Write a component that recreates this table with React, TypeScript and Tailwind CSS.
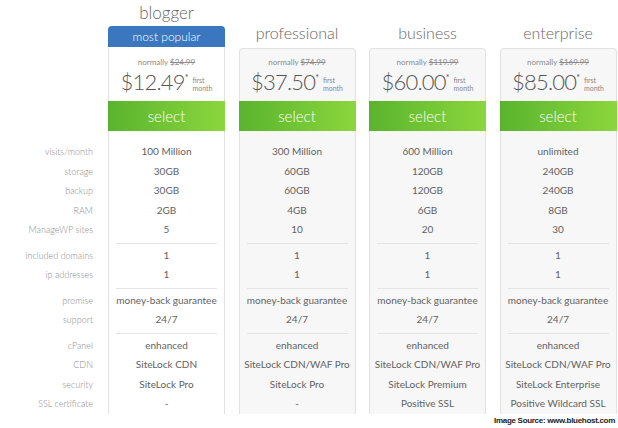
import React from "react";

type Plan = {
  name: string;
  normal: string;
  price: string;
  popular?: boolean;
  groups: string[][];
};

const plans: Plan[] = [
  {
    name: "blogger",
    normal: "$24.99",
    price: "$12.49",
    popular: true,
    groups: [
      ["100 Million", "30GB", "30GB", "2GB", "5"],
      ["1", "1"],
      ["money-back guarantee", "24/7"],
      ["enhanced", "SiteLock CDN", "SiteLock Pro", "-"],
    ],
  },
  {
    name: "professional",
    normal: "$74.99",
    price: "$37.50",
    groups: [
      ["300 Million", "60GB", "60GB", "4GB", "10"],
      ["1", "1"],
      ["money-back guarantee", "24/7"],
      ["enhanced", "SiteLock CDN/WAF Pro", "SiteLock Pro", "-"],
    ],
  },
  {
    name: "business",
    normal: "$119.99",
    price: "$60.00",
    groups: [
      ["600 Million", "120GB", "120GB", "6GB", "20"],
      ["1", "1"],
      ["money-back guarantee", "24/7"],
      ["enhanced", "SiteLock CDN/WAF Pro", "SiteLock Premium", "Positive SSL"],
    ],
  },
  {
    name: "enterprise",
    normal: "$169.99",
    price: "$85.00",
    groups: [
      ["unlimited", "240GB", "240GB", "8GB", "30"],
      ["1", "1"],
      ["money-back guarantee", "24/7"],
      ["enhanced", "SiteLock CDN/WAF Pro", "SiteLock Enterprise", "Positive Wildcard SSL"],
    ],
  },
];

const labels: string[][] = [
  ["visits/month", "storage", "backup", "RAM", "ManageWP sites"],
  ["included domains", "ip addresses"],
  ["promise", "support"],
  ["cPanel", "CDN", "security", "SSL certificate"],
];

function Card({ plan }: { plan: Plan }) {
  const bg = plan.popular ? "bg-white" : "bg-[#f7f7f7]";
  return (
    <div className="flex w-[117px] shrink-0 flex-col">
      {plan.popular ? (
        <div className="flex h-[26px] items-center justify-center text-[17px] font-light leading-[20px] text-[#666]">
          {plan.name}
        </div>
      ) : (
        <div className="flex h-[48px] items-end justify-center pb-[6px] text-[16px] font-light leading-[18px] text-[#666]">
          {plan.name}
        </div>
      )}
      <div
        className={
          "flex flex-1 flex-col rounded-t-[4px] border-x border-[#e2e2e2] " +
          bg +
          (plan.popular ? "" : " border-t")
        }
      >
        {plan.popular && (
          <div className="-mx-px flex h-[21px] items-center justify-center rounded-t-[4px] bg-[#3a77bf] text-[12px] font-light text-white">
            most popular
          </div>
        )}
        <div
          className={
            "flex flex-col items-center " +
            (plan.popular ? "h-[54px] pt-[9px]" : "h-[52px] pt-[7px]")
          }
        >
          <div className="text-[8px] leading-[12px] text-[#8a8a8a]">
            normally <span className="line-through">{plan.normal}</span>
          </div>
          <div className="mt-px flex items-start">
            <span className="text-[22px] font-light leading-[26px] tracking-[-0.8px] text-[#555]">
              {plan.price}
            </span>
            <span className="mt-[4px] text-[9px] leading-[9px] text-[#555]">*</span>
            <span className="ml-[4px] mt-[7px] flex flex-col text-[7px] leading-[8px] text-[#888]">
              <span>first</span>
              <span>month</span>
            </span>
          </div>
        </div>
        <div className="-mx-px flex h-[30px] items-center justify-center bg-gradient-to-r from-[#59b42d] to-[#8bd63d] text-[15px] font-light text-white">
          select
        </div>
        <div className="flex flex-col pt-[11px]">
          {plan.groups.map((g, gi) => (
            <div key={gi} className="flex flex-col">
              {gi > 0 && <div className="mx-[7px] mb-[2px] mt-[3px] h-px bg-[#e4e4e4]" />}
              {g.map((v, vi) => (
                <div
                  key={vi}
                  className="h-[19.5px] whitespace-nowrap text-center text-[10px] leading-[19.5px] text-[#626262]"
                >
                  {v}
                </div>
              ))}
            </div>
          ))}
        </div>
      </div>
    </div>
  );
}

export default function App() {
  return (
    <div
      className="flex h-[428px] w-[618px] flex-col overflow-hidden bg-white"
      style={{ fontFamily: "Lato, 'Open Sans', sans-serif" }}
    >
      <div className="flex h-[414px]">
        <div className="flex w-[108px] shrink-0 flex-col pr-[15px] pt-[142px]">
          {labels.map((g, gi) => (
            <div key={gi} className="flex flex-col">
              {gi > 0 && <div className="mb-[2px] mt-[3px] h-px" />}
              {g.map((l, li) => (
                <div
                  key={li}
                  className="h-[19.5px] whitespace-nowrap text-right text-[9px] font-light leading-[19.5px] text-[#8a8a8a]"
                >
                  {l}
                </div>
              ))}
            </div>
          ))}
        </div>
        <div className="flex gap-[13.5px]">
          {plans.map((p) => (
            <Card key={p.name} plan={p} />
          ))}
        </div>
      </div>
      <div
        className="flex justify-end pr-[3px] pt-[1px] text-[8px] font-bold leading-[11px] tracking-[-0.3px] text-[#222]"
        style={{ fontFamily: "'Liberation Sans', Arial, sans-serif" }}
      >
        Image Source: www.bluehost.com
      </div>
    </div>
  );
}
